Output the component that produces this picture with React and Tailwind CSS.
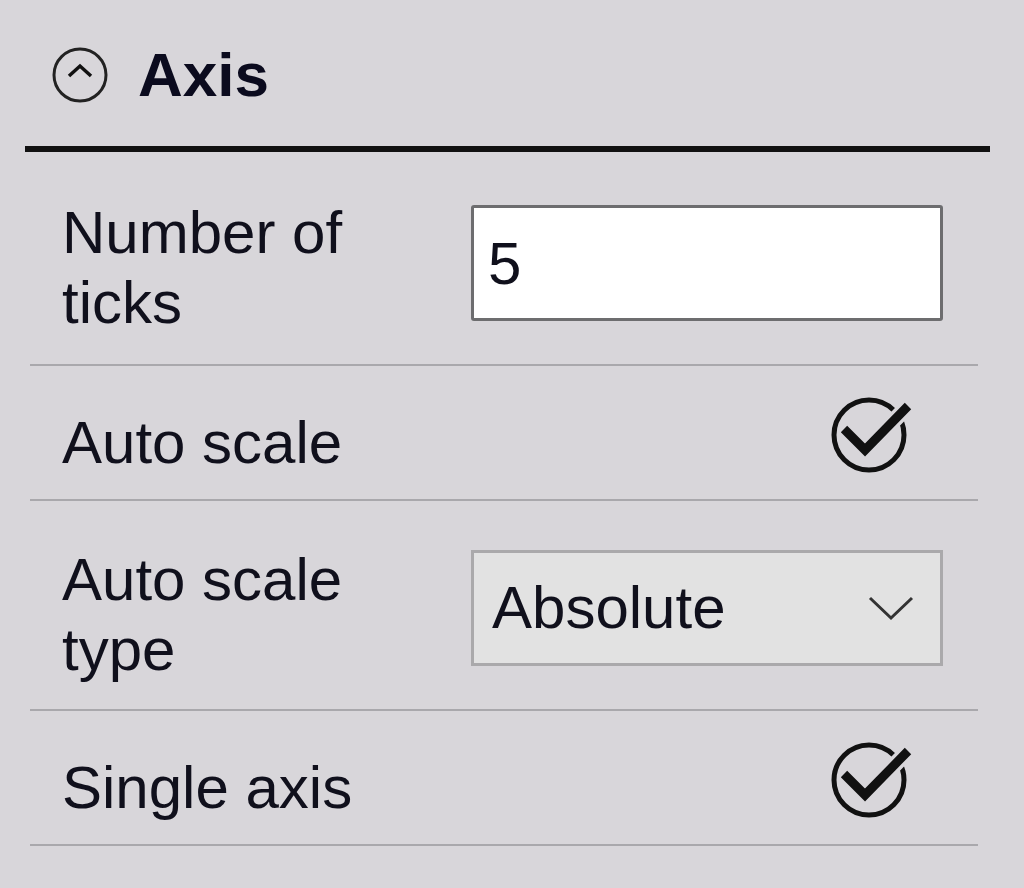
import React from 'react';

const CheckIcon = () => (
  <svg width="86" height="80" viewBox="0 0 86 80" fill="none">
    <circle cx="39" cy="40" r="35" stroke="#111" strokeWidth="5" />
    <path d="M14 34 L35 55 L78 11" stroke="#d8d6da" strokeWidth="16" strokeLinecap="butt" />
    <path d="M14 34 L35 55 L78 11" stroke="#111" strokeWidth="9" strokeLinejoin="miter" />
  </svg>
);

const CollapseIcon = () => (
  <svg width="58" height="58" viewBox="0 0 58 58" fill="none">
    <circle cx="29" cy="29" r="26" stroke="#222" strokeWidth="3" />
    <path d="M18 30 L29 20 L40 30" stroke="#111" strokeWidth="3.5" />
  </svg>
);

const Row = ({ height, label, children }) => (
  <div className={`flex items-center border-b-2 border-[#a9a8ac] ${height}`}>
    <div className="w-[441px] shrink-0 pl-[32px] pt-[20px] leading-[70px]">{label}</div>
    <div className="w-[472px] shrink-0">{children}</div>
  </div>
);

export default function App() {
  return (
    <div className="min-h-[888px] w-[1024px] bg-[#d8d6da] text-[60px] text-[#10101c] font-['Liberation_Sans',Arial,sans-serif]">
      <div className="flex items-center gap-[29px] pl-[51px] pt-[47px] h-[102px]">
        <CollapseIcon />
        <span className="font-bold text-[62px] leading-none text-[#0b0b1e]">Axis</span>
      </div>
      <div className="ml-[25px] mt-[44px] w-[965px] h-[6px] bg-[#111]" />
      <div className="ml-[30px] w-[948px]">
        <Row height="h-[214px]" label={<>Number of<br />ticks</>}>
          <div className="mt-[10px] h-[116px] rounded-[3px] border-[3px] border-[#6d6d6f] bg-white pl-[14px] flex items-center leading-none pt-[2px]">
            5
          </div>
        </Row>
        <Row height="h-[135px]" label="Auto scale">
          <div className="flex justify-end pr-[27px] pt-[4px]">
            <CheckIcon />
          </div>
        </Row>
        <Row height="h-[210px]" label={<>Auto scale<br />type</>}>
          <div className="mt-[6px] h-[116px] border-[3px] border-[#aaa9ab] bg-[#e2e2e2] pl-[18px] pr-[26px] flex items-center justify-between leading-none">
            <span>Absolute</span>
            <svg width="46" height="26" viewBox="0 0 46 26" fill="none">
              <path d="M2 3 L23 23 L44 3" stroke="#333" strokeWidth="3" />
            </svg>
          </div>
        </Row>
        <Row height="h-[135px]" label="Single axis">
          <div className="flex justify-end pr-[27px] pt-[4px]">
            <CheckIcon />
          </div>
        </Row>
      </div>
    </div>
  );
}
